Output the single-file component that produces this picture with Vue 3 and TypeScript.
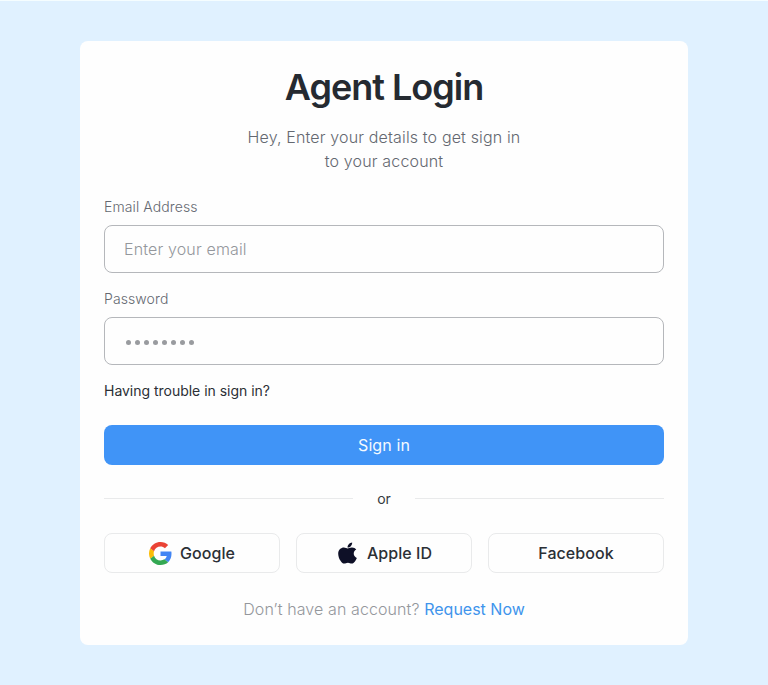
<script setup lang="ts">
import { ref } from 'vue'

const email = ref<string>('')
const maskDots: number = 8
</script>

<template>
  <main class="page">
    <form class="card" @submit.prevent>
      <h1 class="title">Agent Login</h1>
      <p class="intro">Hey, Enter your details to get sign in<br />to your account</p>

      <label class="field email-field">
        <span class="label">Email Address</span>
        <input v-model="email" class="control" type="email" placeholder="Enter your email" />
      </label>

      <div class="field">
        <span class="label">Password</span>
        <div class="control mask">
          <span v-for="n in maskDots" :key="n" class="dot"></span>
        </div>
      </div>

      <a class="trouble">Having trouble in sign in?</a>
      <button class="submit" type="submit">Sign in</button>

      <div class="divider"><span>or</span></div>

      <div class="socials">
        <button class="social" type="button">
          <svg class="google" viewBox="0 0 48 48">
            <path fill="#4285F4" d="M46.98 24.55c0-1.57-.15-3.09-.38-4.55H24v9.02h12.94c-.58 2.96-2.26 5.48-4.78 7.18l7.73 6c4.51-4.18 7.09-10.36 7.09-17.65z" />
            <path fill="#FBBC05" d="M10.53 28.59c-.48-1.45-.76-2.99-.76-4.59s.27-3.14.76-4.59l-7.98-6.19C.92 16.46 0 20.12 0 24c0 3.88.92 7.54 2.56 10.78l7.97-6.19z" />
            <path fill="#EA4335" d="M24 9.5c3.54 0 6.71 1.22 9.21 3.6l6.85-6.85C35.9 2.38 30.47 0 24 0 14.62 0 6.51 5.38 2.56 13.22l7.98 6.19C12.43 13.72 17.74 9.5 24 9.5z" />
            <path fill="#34A853" d="M24 48c6.48 0 11.93-2.13 15.89-5.81l-7.73-6c-2.15 1.45-4.92 2.3-8.16 2.3-6.26 0-11.57-4.22-13.47-9.91l-7.98 6.19C6.51 42.62 14.62 48 24 48z" />
          </svg>
          <span>Google</span>
        </button>
        <button class="social apple-button" type="button">
          <svg class="apple" viewBox="0 0 384 512" preserveAspectRatio="none">
            <path fill="#0e1027" d="M318.7 268.7c-.2-36.7 16.4-64.4 50-84.8-18.8-26.9-47.2-41.7-84.7-44.6-35.5-2.8-74.3 20.7-88.5 20.7-15 0-49.4-19.7-76.4-19.7C63.3 141.2 4 184.8 4 273.5q0 39.3 14.4 81.2c12.8 36.7 59 126.7 107.2 125.2 25.2-.6 43-17.9 75.8-17.9 31.8 0 48.3 17.9 76.4 17.9 48.6-.7 90.4-82.5 102.6-119.3-65.2-30.7-61.7-90-61.7-91.9zm-56.6-164.2c27.3-32.4 24.8-61.9 24-72.5-24.1 1.4-52 16.4-67.9 34.9-17.5 19.8-27.8 44.3-25.6 71.9 26.1 2 49.9-11.4 69.5-34.3z" />
          </svg>
          <span>Apple ID</span>
        </button>
        <button class="social" type="button"><span>Facebook</span></button>
      </div>

      <p class="signup">Don’t have an account? <a>Request Now</a></p>
    </form>
  </main>
</template>

<style>
body {
  background: #e0f1ff;
}
</style>

<style scoped>
.page {
  box-sizing: border-box;
  min-height: 685px;
  padding: 40px 80px;
  border-top: 1px solid #f5fdff;
  background: #e0f1ff;
  font-family: Inter, "Liberation Sans", sans-serif;
  font-size: 16px;
  font-weight: 300;
  line-height: 24px;
  letter-spacing: 0.15px;
}
.card {
  display: flex;
  flex-direction: column;
  padding: 24px;
  border-radius: 8px;
  background: #fefefe;
}
.title {
  margin: 0;
  color: #252a31;
  font-size: 36px;
  font-weight: 600;
  line-height: 44px;
  letter-spacing: -1px;
  text-align: center;
}
.intro {
  margin: 16px 0 24px;
  color: #646870;
  text-align: center;
}
.field {
  display: flex;
  flex-direction: column;
  gap: 8px;
}
.email-field {
  margin-bottom: 16px;
}
.label {
  color: #646870;
  font-size: 14px;
  line-height: 20px;
  letter-spacing: 0.1px;
}
.control {
  box-sizing: border-box;
  width: 100%;
  height: 48px;
  padding: 0 19px;
  border: 1px solid #b5b7bb;
  border-radius: 8px;
  outline: none;
  background: transparent;
  color: #252a31;
  font: inherit;
  letter-spacing: inherit;
}
.control::placeholder {
  color: #94979c;
  opacity: 1;
}
.mask {
  display: flex;
  align-items: center;
  gap: 4px;
  padding: 2px 21px 0;
}
.dot {
  width: 5px;
  height: 5px;
  border-radius: 50%;
  background: #999b9f;
}
.trouble {
  margin: 16px 0 24px;
  color: #2b2f35;
  font-size: 14px;
  font-weight: 400;
  line-height: 20px;
  letter-spacing: -0.02px;
}
.submit {
  height: 40px;
  padding: 0;
  border: 0;
  border-radius: 8px;
  background: #4094f7;
  color: #f5faff;
  font: inherit;
  font-weight: 400;
  letter-spacing: 0.1px;
}
.divider {
  display: flex;
  align-items: center;
  gap: 24px;
  margin: 24px 0;
  color: #353940;
  font-size: 14px;
  font-weight: 400;
  line-height: 20px;
  letter-spacing: 0;
}
.divider::before,
.divider::after {
  flex: 1;
  height: 1px;
  margin-bottom: 2px;
  background: #e9eaeb;
  content: "";
}
.socials {
  display: grid;
  grid-template-columns: repeat(3, 1fr);
  gap: 16px;
}
.social {
  display: flex;
  align-items: center;
  justify-content: center;
  gap: 8px;
  height: 40px;
  padding: 0;
  border: 1px solid #e9eaeb;
  border-radius: 8px;
  background: transparent;
  color: #2b3036;
  font: inherit;
  font-weight: 500;
  letter-spacing: 0.05px;
}
.google {
  width: 23px;
  height: 23px;
}
.apple-button {
  gap: 10px;
  padding-left: 2px;
}
.apple {
  width: 19px;
  height: 24px;
}
.signup {
  margin: 24px 0 0;
  color: #94979c;
  letter-spacing: 0.1px;
  text-align: center;
}
.signup a {
  color: #4094ec;
  font-weight: 400;
  letter-spacing: 0;
}
</style>
